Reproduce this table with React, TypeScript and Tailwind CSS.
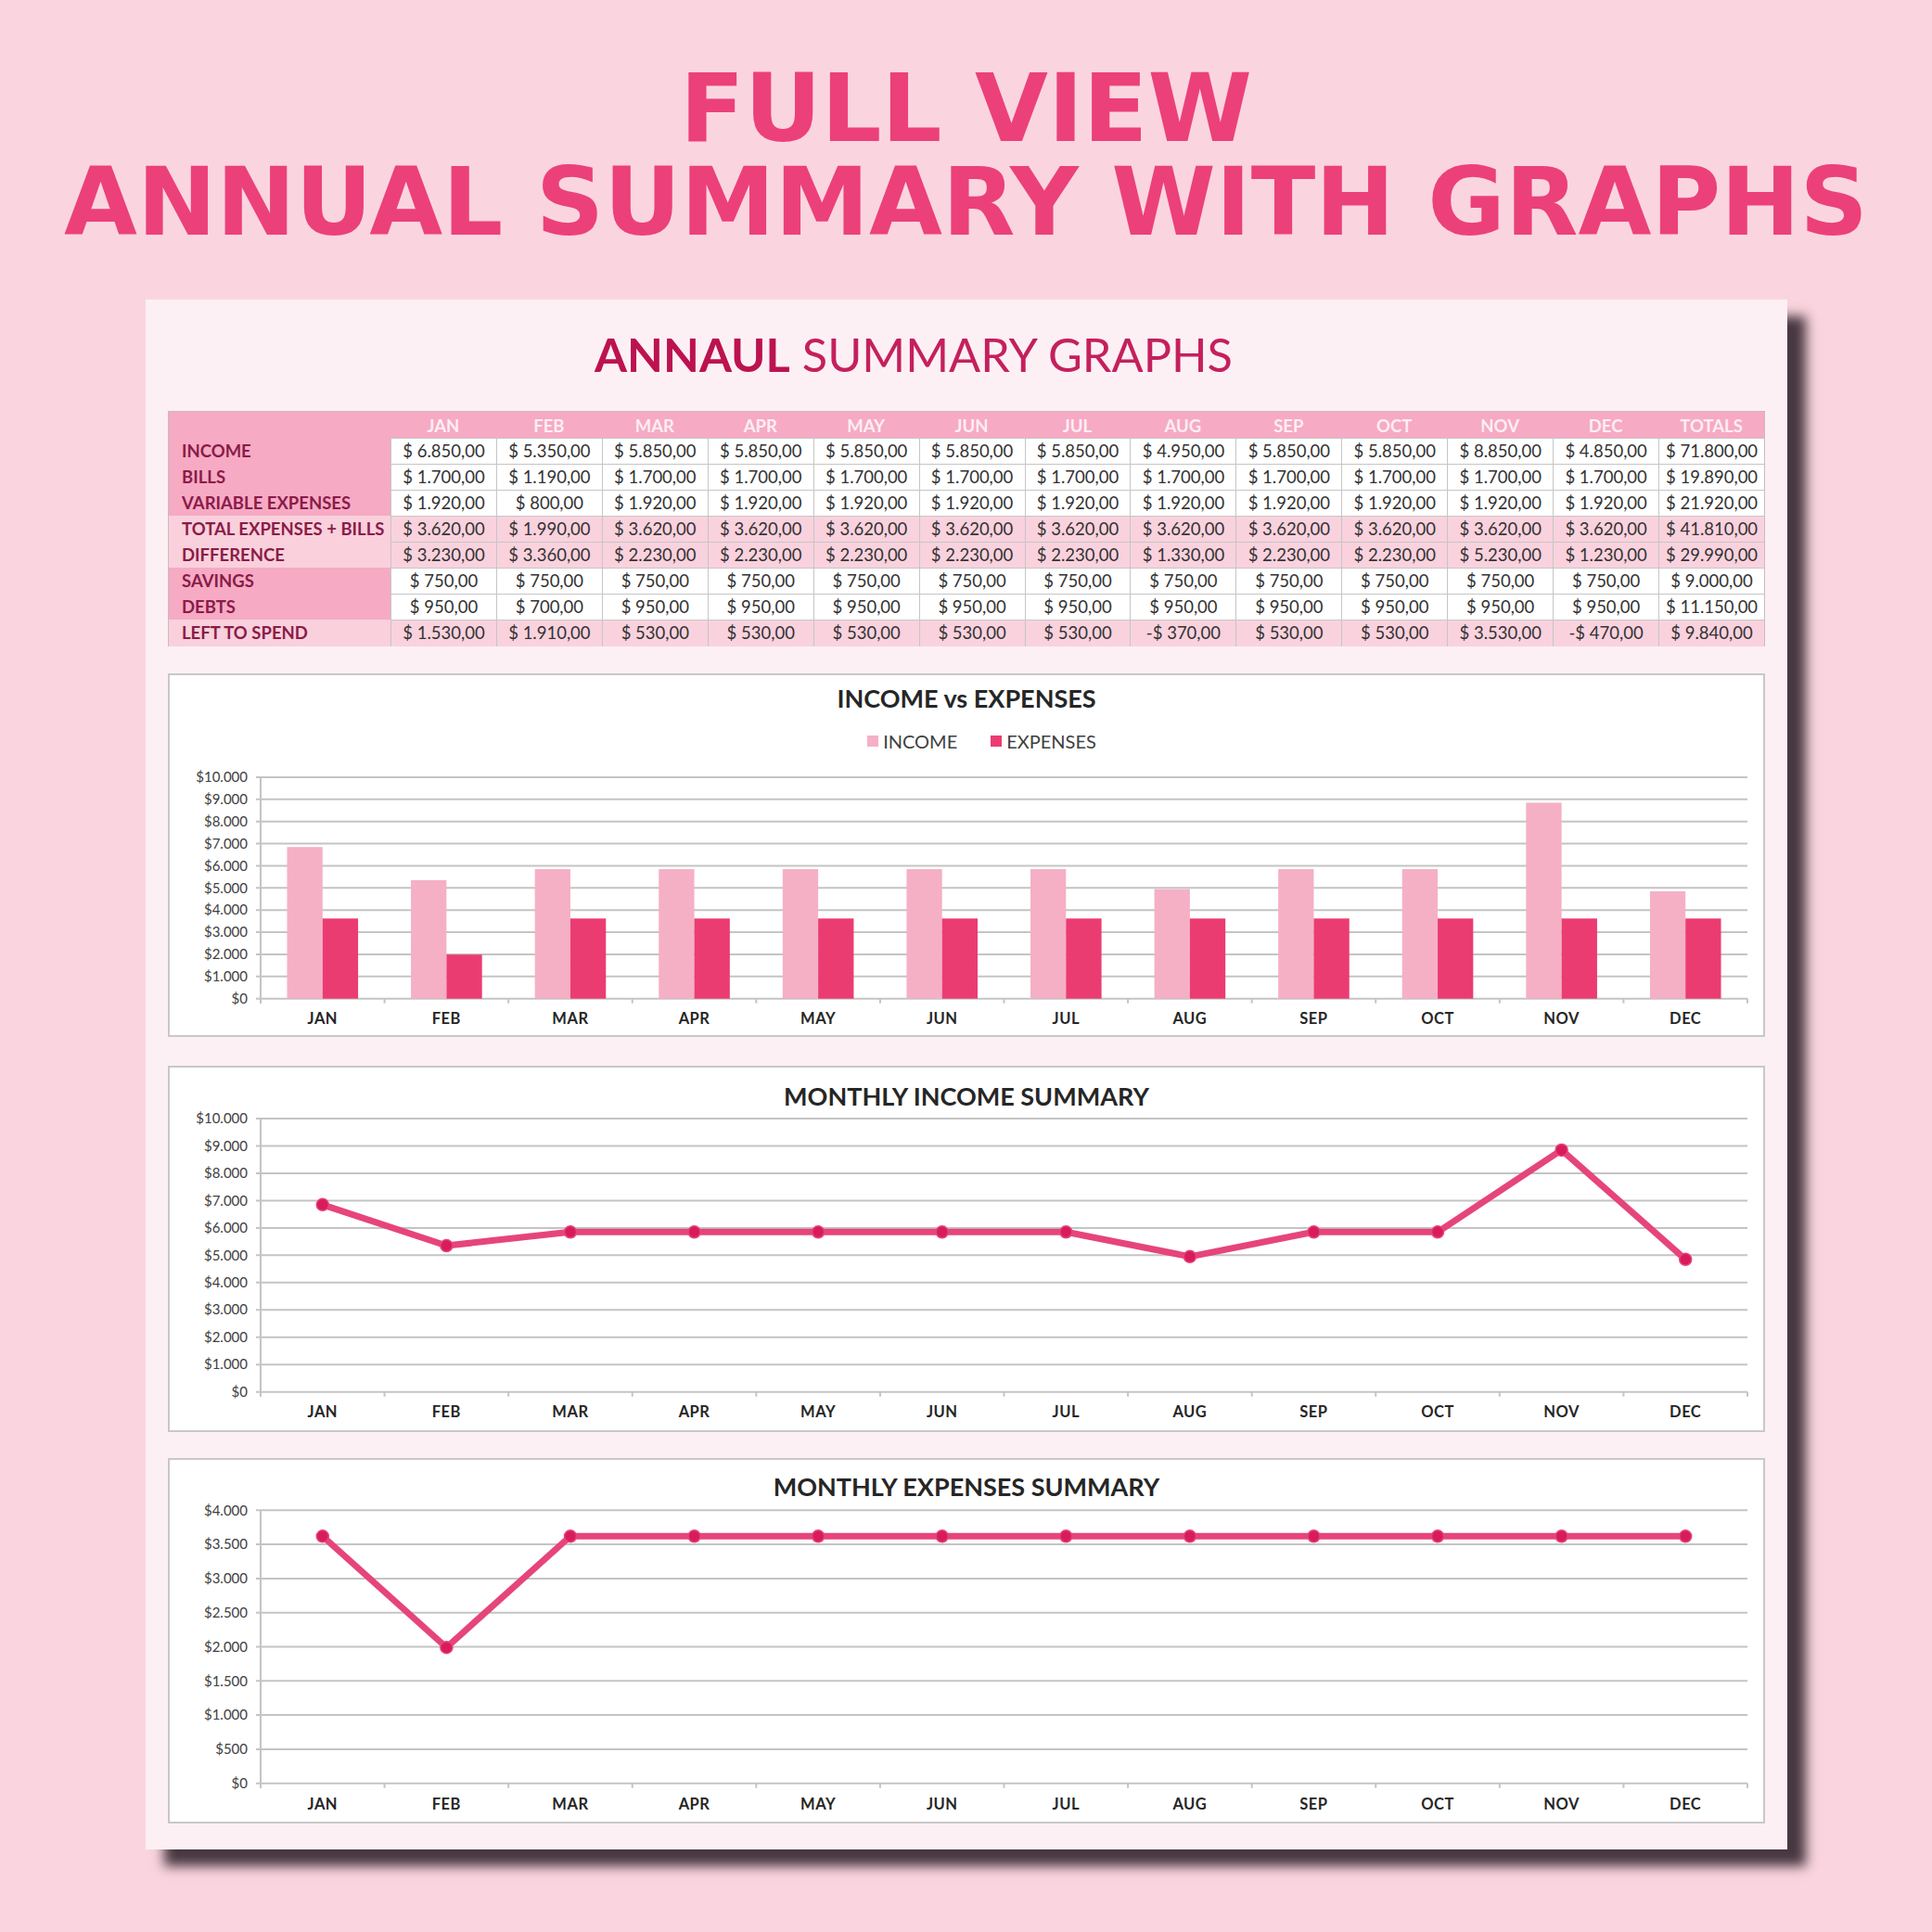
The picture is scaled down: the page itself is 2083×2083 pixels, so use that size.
import React from "react";

const MONTHS = ["JAN", "FEB", "MAR", "APR", "MAY", "JUN", "JUL", "AUG", "SEP", "OCT", "NOV", "DEC"];

type Row = { label: string; vals: string[]; tone: "a" | "b" };

const rep = (v: string, n: number) => Array.from({ length: n }, () => v);

const ROWS: Row[] = [
  {
    label: "INCOME",
    tone: "a",
    vals: ["$ 6.850,00", "$ 5.350,00", "$ 5.850,00", "$ 5.850,00", "$ 5.850,00", "$ 5.850,00", "$ 5.850,00", "$ 4.950,00", "$ 5.850,00", "$ 5.850,00", "$ 8.850,00", "$ 4.850,00", "$ 71.800,00"],
  },
  { label: "BILLS", tone: "a", vals: ["$ 1.700,00", "$ 1.190,00", ...rep("$ 1.700,00", 10), "$ 19.890,00"] },
  { label: "VARIABLE EXPENSES", tone: "a", vals: ["$ 1.920,00", "$ 800,00", ...rep("$ 1.920,00", 10), "$ 21.920,00"] },
  { label: "TOTAL EXPENSES + BILLS", tone: "b", vals: ["$ 3.620,00", "$ 1.990,00", ...rep("$ 3.620,00", 10), "$ 41.810,00"] },
  {
    label: "DIFFERENCE",
    tone: "b",
    vals: ["$ 3.230,00", "$ 3.360,00", ...rep("$ 2.230,00", 5), "$ 1.330,00", "$ 2.230,00", "$ 2.230,00", "$ 5.230,00", "$ 1.230,00", "$ 29.990,00"],
  },
  { label: "SAVINGS", tone: "a", vals: [...rep("$ 750,00", 12), "$ 9.000,00"] },
  { label: "DEBTS", tone: "a", vals: ["$ 950,00", "$ 700,00", ...rep("$ 950,00", 10), "$ 11.150,00"] },
  {
    label: "LEFT TO SPEND",
    tone: "b",
    vals: ["$ 1.530,00", "$ 1.910,00", ...rep("$ 530,00", 5), "-$ 370,00", "$ 530,00", "$ 530,00", "$ 3.530,00", "-$ 470,00", "$ 9.840,00"],
  },
];

const INCOME = [6850, 5350, 5850, 5850, 5850, 5850, 5850, 4950, 5850, 5850, 8850, 4850];
const EXPENSES = [3620, 1990, 3620, 3620, 3620, 3620, 3620, 3620, 3620, 3620, 3620, 3620];

const SVG_W = 1717;
const AX = 98;
const RX = 1701;
const CW = (RX - AX) / 12;
const cx = (i: number) => AX + CW * (i + 0.5);

const fmt = (v: number) =>
  "$" + (v >= 1000 ? `${Math.floor(v / 1000)}.${String(v % 1000).padStart(3, "0")}` : `${v}`);

const GRID = "#c4c4c4";
const LATO = "Lato, 'Liberation Sans', sans-serif";

function Axes({ top, bottom, max, step, labelY }: { top: number; bottom: number; max: number; step: number; labelY: number }) {
  const n = Math.round(max / step);
  const ys = Array.from({ length: n + 1 }, (_, k) => bottom - ((bottom - top) * k) / n);
  return (
    <g>
      {ys.map((y, k) => (
        <g key={k}>
          <line x1={93} x2={RX} y1={y} y2={y} stroke={GRID} strokeWidth={2} />
          <text x={84} y={y + 5.2} textAnchor="end" fontSize={15} fill="#404040" fontFamily={LATO}>
            {fmt(step * k)}
          </text>
        </g>
      ))}
      <line x1={AX} x2={AX} y1={top} y2={bottom + 5} stroke={GRID} strokeWidth={2} />
      {Array.from({ length: 13 }, (_, i) => (
        <line key={i} x1={AX + CW * i} x2={AX + CW * i} y1={bottom} y2={bottom + 5} stroke={GRID} strokeWidth={2} />
      ))}
      {MONTHS.map((m, i) => (
        <text key={m} x={cx(i)} y={labelY + 6} textAnchor="middle" fontSize={16.5} fontWeight={700} fill="#262626" fontFamily={LATO} letterSpacing={0.5}>
          {m}
        </text>
      ))}
    </g>
  );
}

function BarChart() {
  const top = 24;
  const bottom = 262.7;
  const y = (v: number) => bottom - ((bottom - top) * v) / 10000;
  const bw = 38.3;
  return (
    <svg width={SVG_W} height={302} viewBox={`0 0 ${SVG_W} 302`} className="block">
      <Axes top={top} bottom={bottom} max={10000} step={1000} labelY={284} />
      {INCOME.map((v, i) => (
        <rect key={"i" + i} x={cx(i) - bw} y={y(v)} width={bw} height={bottom - y(v)} fill="#f5b0c6" />
      ))}
      {EXPENSES.map((v, i) => (
        <rect key={"e" + i} x={cx(i)} y={y(v)} width={bw} height={bottom - y(v)} fill="#eb3c72" />
      ))}
    </svg>
  );
}

function LineChart({ data, max, step, height, top, bottom, labelY }: { data: number[]; max: number; step: number; height: number; top: number; bottom: number; labelY: number }) {
  const y = (v: number) => bottom - ((bottom - top) * v) / max;
  const pts = data.map((v, i) => `${cx(i)},${y(v)}`).join(" ");
  return (
    <svg width={SVG_W} height={height} viewBox={`0 0 ${SVG_W} ${height}`} className="block">
      <Axes top={top} bottom={bottom} max={max} step={step} labelY={labelY} />
      <polyline points={pts} fill="none" stroke="#e6457a" strokeWidth={7} strokeLinejoin="round" strokeLinecap="round" />
      {data.map((v, i) => (
        <circle key={i} cx={cx(i)} cy={y(v)} r={6.5} fill="#d81b5c" stroke="#e6457a" strokeWidth={1.5} />
      ))}
    </svg>
  );
}

function ChartTitle({ children, pt }: { children: React.ReactNode; pt: string }) {
  return (
    <div className={`${pt} text-center text-[27px] font-bold leading-[30px] text-[#262626]`} style={{ fontFamily: LATO }}>
      {children}
    </div>
  );
}

export default function App() {
  return (
    <div className="h-[2083px] w-[2083px] overflow-hidden bg-[#fad5df]">
      <div
        className="pt-[66px] text-center text-[102px] font-bold leading-[101px] text-[#ec407a]"
        style={{ fontFamily: "'DejaVu Sans', sans-serif" }}
      >
        FULL VIEW
        <br />
        ANNUAL SUMMARY WITH GRAPHS
      </div>

      <div className="ml-[157px] mt-[55px] w-[1770px] bg-[#fdf0f4] px-[24px] pb-[28px] pt-[33px] shadow-[20px_18px_12px_rgba(62,46,56,0.95)]">
        <div className="pr-[114px] text-center text-[50.5px] leading-[52px] text-[#c4205d]" style={{ fontFamily: LATO }}>
          <span className="font-bold text-[#bc1250]">ANNAUL</span> SUMMARY GRAPHS
        </div>

        <div className="mt-[35px] border border-[#c9bcc1] bg-white">
          <div className="grid h-[28px] grid-cols-[239px_repeat(13,minmax(0,1fr))] bg-[#f6aac4]">
            <div />
            {[...MONTHS, "TOTALS"].map((m) => (
              <div
                key={m}
                className="flex items-center justify-center pt-[2px] text-[18.5px] font-bold text-[#fdeef3]"
                style={{ fontFamily: LATO }}
              >
                {m}
              </div>
            ))}
          </div>
          {ROWS.map((r) => (
            <div key={r.label} className="grid h-[28px] grid-cols-[239px_repeat(13,minmax(0,1fr))]">
              <div
                className={`flex items-center pl-[14px] text-[18.5px] font-bold text-[#8a1b48] ${r.tone === "a" ? "bg-[#f6aac4]" : "bg-[#f9d0dc]"}`}
                style={{ fontFamily: LATO }}
              >
                {r.label}
              </div>
              {r.vals.map((v, i) => (
                <div
                  key={i}
                  className={`flex items-center justify-center border-l-[1.5px] border-t-[1.5px] border-[#c6c6c6] text-[18.5px] text-[#333333] ${r.tone === "a" ? "bg-white" : "bg-[#f9d2de]"}`}
                  style={{ fontFamily: LATO }}
                >
                  {v}
                </div>
              ))}
            </div>
          ))}
        </div>

        <div className="mt-[29px] border-2 border-[#c8c8c8] bg-white">
          <ChartTitle pt="pt-[10px]">INCOME vs EXPENSES</ChartTitle>
          <div
            className="ml-[33px] mt-[16px] flex h-[30px] items-center justify-center gap-[36px] text-[20px] text-[#404040]"
            style={{ fontFamily: LATO }}
          >
            <div className="flex items-center gap-[5px]">
              <span className="h-[12px] w-[12px] bg-[#f5b0c6]" />
              <span>INCOME</span>
            </div>
            <div className="flex items-center gap-[5px]">
              <span className="h-[12px] w-[12px] bg-[#eb3c72]" />
              <span>EXPENSES</span>
            </div>
          </div>
          <BarChart />
        </div>

        <div className="mt-[31px] border-2 border-[#c8c8c8] bg-white">
          <ChartTitle pt="pt-[16px]">MONTHLY INCOME SUMMARY</ChartTitle>
          <LineChart data={INCOME} max={10000} step={1000} height={345} top={9} bottom={303.7} labelY={325} />
        </div>

        <div className="mt-[28px] border-2 border-[#c8c8c8] bg-white">
          <ChartTitle pt="pt-[14px]">MONTHLY EXPENSES SUMMARY</ChartTitle>
          <LineChart data={EXPENSES} max={4000} step={500} height={346} top={10.3} bottom={304.7} labelY={327} />
        </div>
      </div>
    </div>
  );
}
